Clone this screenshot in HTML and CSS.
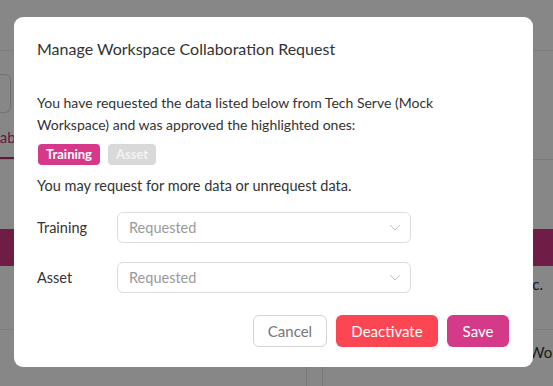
FILE: index.html
```html
<!DOCTYPE html>
<html lang="en">
<head>
  <meta charset="UTF-8" />
  <meta name="viewport" content="width=device-width, initial-scale=1.0"/>
  <title>Manage Workspace Collaboration Request</title>
  <link rel="stylesheet" href="styles.css">
</head>
<body>
  <div class="page">
    <div class="topbar"></div>
    <div class="toolbar"><div class="search"></div></div>
    <div class="tabs"><span class="tab active">Labels</span></div>
    <div class="table-head"></div>
    <div class="table-row"><span class="cell-right">Tech Serve Inc.</span></div>
    <div class="table-row"><span class="cell-work">Work</span></div>
    <div class="table-foot"><div class="col-line"></div></div>
  </div>

  <div class="overlay">
    <div class="modal">
      <h2 class="modal-title">Manage Workspace Collaboration Request</h2>

      <p class="modal-text">You have requested the data listed below from Tech Serve (Mock<br>Workspace) and was approved the highlighted ones:</p>

      <div class="chips">
        <span class="chip chip-on">Training</span>
        <span class="chip chip-off">Asset</span>
      </div>

      <p class="modal-text note">You may request for more data or unrequest data.</p>

      <div class="field">
        <label class="field-label">Training</label>
        <div class="select">
          <span>Requested</span>
          <svg width="12" height="7" viewBox="0 0 12 7"><path d="M1 1l5 5 5-5" fill="none" stroke="#c4c4c4" stroke-width="1"/></svg>
        </div>
      </div>

      <div class="field">
        <label class="field-label">Asset</label>
        <div class="select">
          <span>Requested</span>
          <svg width="12" height="7" viewBox="0 0 12 7"><path d="M1 1l5 5 5-5" fill="none" stroke="#c4c4c4" stroke-width="1"/></svg>
        </div>
      </div>

      <div class="actions">
        <button class="btn btn-cancel">Cancel</button>
        <button class="btn btn-danger">Deactivate</button>
        <button class="btn btn-save">Save</button>
      </div>
    </div>
  </div>
</body>
</html>
```

FILE: styles.css
```css
body {
  margin: 0;
  padding: 0;
  font-family: 'Lato', 'Open Sans', sans-serif;
  background-color: #ffffff;
  color: #333;
  overflow: hidden;
}

.page {
  display: flex;
  flex-direction: column;
  height: 386px;
}

.topbar {
  height: 50px;
  border-bottom: 1px solid #ececec;
}

.toolbar {
  padding-top: 23px;
  height: 39px;
}

.search {
  width: 10px;
  height: 37px;
  border: 1px solid #d8d8d8;
  border-left: none;
  border-radius: 0 6px 6px 0;
}

.tabs {
  height: 46px;
  border-bottom: 1px solid #e6e6e6;
  display: flex;
  align-items: flex-end;
}

.tab {
  margin-left: -8px;
  padding: 0 6px 11px 0;
  font-size: 15px;
  color: #c0307a;
  border-bottom: 2px solid #b2306f;
}

.table-head {
  margin-top: 69px;
  height: 37px;
  background-color: #d03985;
}

.table-row {
  height: 63px;
  border-bottom: 1px solid #ececec;
  position: relative;
  font-size: 15px;
}

.table-row + .table-row {
  height: 35px;
  border-bottom: none;
}

.cell-right {
  position: absolute;
  right: 10px;
  top: 9px;
}

.cell-work {
  position: absolute;
  left: 529px;
  top: 13px;
}

.table-foot {
  flex: 1;
  padding-left: 306px;
}

.col-line {
  width: 15px;
  height: 100%;
  border-left: 1px solid #e4e4e4;
  border-right: 1px solid #e4e4e4;
}

.overlay {
  position: fixed;
  inset: 0;
  background-color: rgba(0, 0, 0, 0.47);
  padding: 17px 0 0 14px;
}

.modal {
  width: 519px;
  box-sizing: border-box;
  background: #fff;
  border-radius: 9px;
  padding: 22px 24px 20px 23px;
}

.modal-title {
  margin: 0;
  font-size: 16px;
  font-weight: 400;
  line-height: 20px;
  color: #333;
}

.modal-text {
  margin: 33px 0 0;
  font-size: 14px;
  line-height: 22px;
  color: #333;
}

.chips {
  display: flex;
  gap: 8px;
  margin-top: 8px;
  margin-left: 1px;
}

.chip {
  height: 21px;
  line-height: 21px;
  padding: 0 8px;
  border-radius: 4px;
  font-size: 13px;
  font-weight: 700;
}

.chip-on {
  background-color: #d6398a;
  color: #fff;
}

.chip-off {
  background-color: #d9d9d9;
  color: #f3f3f3;
}

.note {
  margin-top: 10px;
  font-size: 14.5px;
}

.field {
  display: flex;
  align-items: center;
  margin-top: 15px;
}

.field + .field {
  margin-top: 19px;
}

.field-label {
  width: 80px;
  font-size: 14.5px;
  color: #333;
}

.select {
  width: 294px;
  height: 31px;
  box-sizing: border-box;
  border: 1px solid #dcdcdc;
  border-radius: 6px;
  display: flex;
  align-items: center;
  justify-content: space-between;
  padding: 0 9px 0 11px;
  font-size: 14.5px;
  color: #9a9a9a;
}

.actions {
  display: flex;
  justify-content: flex-end;
  gap: 9px;
  margin-top: 22px;
}

.btn {
  height: 32px;
  border-radius: 6px;
  border: none;
  font-family: inherit;
  font-size: 15px;
  color: #fff;
  cursor: pointer;
}

.btn-cancel {
  width: 74px;
  background: #fff;
  border: 1px solid #d4d4d4;
  color: #777;
}

.btn-danger {
  width: 102px;
  background-color: #fc4653;
}

.btn-save {
  width: 62px;
  background-color: #d53a88;
}
```
